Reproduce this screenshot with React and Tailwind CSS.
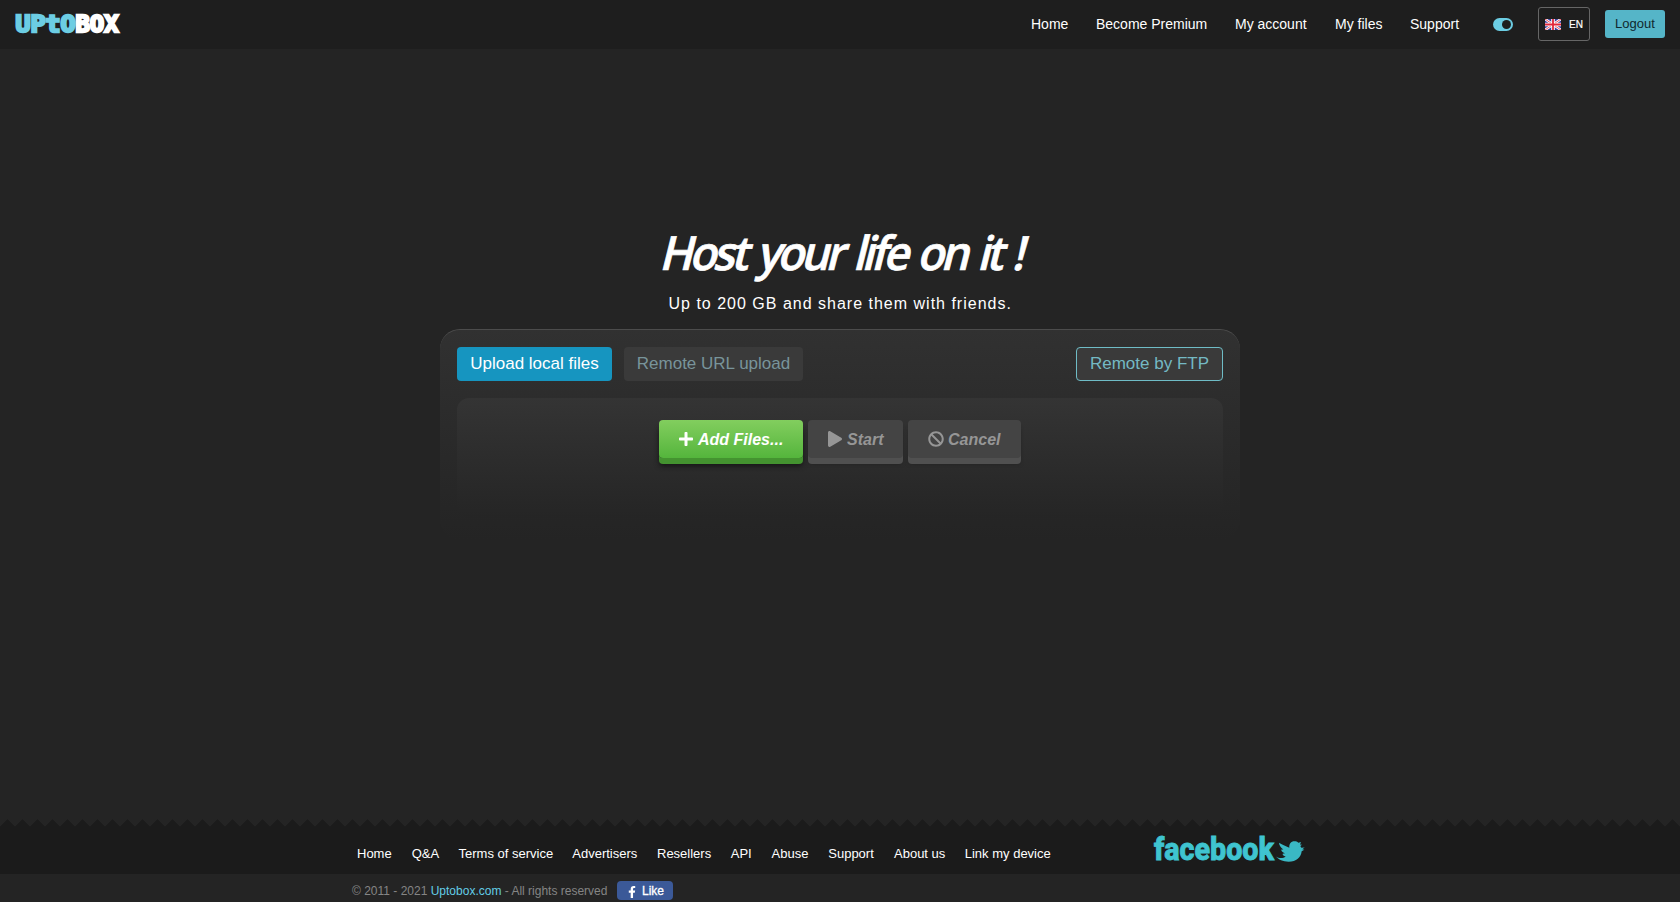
import React from "react";
import { FaPlus, FaPlay, FaBan, FaFacebookF } from "react-icons/fa";

const NAV = [
  ["Home", "w-[37px]"],
  ["Become Premium", "w-[111px]"],
  ["My account", "w-[72px]"],
  ["My files", "w-[47px]"],
  ["Support", "w-[50px]"],
];

const LINKS = [
  ["Home", "w-[35px]"],
  ["Q&A", "w-[27px]"],
  ["Terms of service", "w-[94px]"],
  ["Advertisers", "w-[65px]"],
  ["Resellers", "w-[54px]"],
  ["API", "w-[21px]"],
  ["Abuse", "w-[37px]"],
  ["Support", "w-[46px]"],
  ["About us", "w-[51px]"],
  ["Link my device", "w-[86px]"],
];

function Logo() {
  return (
    <svg width="108" height="24" viewBox="0 0 108 24" className="block overflow-visible">
      <g fontFamily="'DejaVu Sans Mono', monospace" fontWeight="700" fontSize="23" strokeWidth="2.4" strokeLinejoin="miter">
        <text x="1.5" y="19.8" textLength="60" lengthAdjust="spacingAndGlyphs" fill="#6ccde3" stroke="#6ccde3">UPtO</text>
        <text x="61.5" y="19.8" textLength="43" lengthAdjust="spacingAndGlyphs" fill="#fff" stroke="#fff">BOX</text>
      </g>
    </svg>
  );
}

function Flag() {
  return (
    <svg width="16" height="11" viewBox="0 0 16 11" className="block">
      <rect width="16" height="11" fill="#3a3f9c" />
      <path d="M0 0L16 11M16 0L0 11" stroke="#fff" strokeWidth="2.6" />
      <path d="M0 0L16 11M16 0L0 11" stroke="#e8505c" strokeWidth="1" />
      <path d="M8 0V11M0 5.5H16" stroke="#fff" strokeWidth="3.6" />
      <path d="M8 0V11M0 5.5H16" stroke="#e2263a" strokeWidth="1.8" />
    </svg>
  );
}

function Bird() {
  return (
    <svg width="30" height="21" viewBox="0 0 90 62" preserveAspectRatio="none" className="mt-[5px] ml-px block text-[#3ab8c4]">
      <path
        fill="currentColor"
        d="M12 5C20 11 32 14 43 20C42 9 48 1 58 1C63 1 67 2 70 5L78 3L75 10L81 11L76 15L79 20L89 19L82 24L88 26L80 30C78 48 64 61 41 61C24 61 10 55 3 46C12 52 24 52 32 46C25 44 22 41 23 38L30 36C22 34 18 29 19 25L25 25C17 19 12 12 12 5Z"
      />
    </svg>
  );
}

function Header() {
  return (
    <header className="flex h-[49px] items-center bg-[#1e1e1e] pr-[15px] pl-[14px] text-white">
      <div className="mb-[2px]"><Logo /></div>
      <nav className="mb-[1px] ml-auto flex gap-[28px] text-[14px] leading-[20px]">
        {NAV.map(([t, w]) => (
          <a key={t} className={`block whitespace-nowrap ${w}`}>{t}</a>
        ))}
      </nav>
      <div className="ml-[33px] flex h-[13px] w-[20px] items-center justify-end rounded-full bg-[#6ccde3] pr-[2px]">
        <div className="size-[9px] rounded-full bg-[#1e1e1e]" />
      </div>
      <button className="mb-[1px] ml-[25px] flex h-[34px] w-[52px] items-center rounded-[3px] border border-[#666] pl-[6px]">
        <Flag />
        <span className="ml-[8px] text-[10px] [-webkit-text-stroke:0.2px_white]">EN</span>
      </button>
      <button className="mb-[1px] ml-[15px] h-[28px] w-[60px] rounded-[3px] bg-[#55b5c8] text-[13px] leading-[28px] text-[#10282e]">Logout</button>
    </header>
  );
}

function Main() {
  return (
    <main className="flex h-[770px] flex-col items-center pt-[170px] text-white">
      <h1 className="h-[68px] w-[363px] whitespace-nowrap">
        <span className="block origin-[0_50px] [transform:skewX(-14deg)_scaleX(0.95)] font-['Open_Sans',sans-serif] text-[47px] leading-[66px] font-semibold tracking-[-3.8px] [word-spacing:4px] [-webkit-text-stroke:0.7px_white]">Host your life on it !</span>
      </h1>
      <p className="mt-[5px] h-[24px] w-[343px] text-[16px] leading-[24px] tracking-[1px] whitespace-nowrap">Up to 200 GB and share them with friends.</p>
      <section className="mt-[13px] h-[211px] w-[800px] rounded-[20px] border-t border-[#4c4c4c] bg-linear-to-b from-[#313131] to-[#242424] px-[17px] pt-[17px]">
        <div className="flex h-[34px] text-[17px] leading-[32px]">
          <button className="w-[155px] rounded-[4px] bg-[#1695c0]">Upload local files</button>
          <button className="ml-[12px] w-[179px] rounded-[4px] bg-[#3a3a3a] text-[#78949a]">Remote URL upload</button>
          <button className="ml-auto w-[147px] rounded-[4px] border border-[#6fbcc6] bg-[#3a3a3a] leading-[30px] text-[#74b9c4]">Remote by FTP</button>
        </div>
        <div className="mt-[17px] flex h-[120px] justify-center gap-[5px] rounded-[12px] bg-linear-to-b from-[#343434] to-[#252525] pt-[22px] text-[16px] font-bold italic">
          <button className="flex h-[38px] w-[144px] items-center rounded-[4px] bg-linear-to-b from-[#82ce5e] to-[#54b53c] pl-[19px] whitespace-nowrap shadow-[0_6px_0_#449330,0_8px_5px_#151515]">
            <FaPlus size={16} />
            <span className="mt-[2px] ml-[4px]">Add Files...</span>
          </button>
          <button className="flex h-[38px] w-[95px] items-center rounded-[4px] bg-[#444] pl-[19px] text-[#969696] shadow-[0_6px_0_#505050,0_7px_3px_#262626]">
            <FaPlay size={16} />
            <span className="mt-[2px] ml-[4px]">Start</span>
          </button>
          <button className="flex h-[38px] w-[113px] items-center rounded-[4px] bg-[#444] pl-[20px] text-[#969696] shadow-[0_6px_0_#505050,0_7px_3px_#262626]">
            <FaBan size={16} />
            <span className="mt-[2px] ml-[4px]">Cancel</span>
          </button>
        </div>
      </section>
    </main>
  );
}

function Footer() {
  return (
    <footer>
      <svg width="1680" height="8" className="block">
        <defs>
          <pattern id="zigzag" width="15" height="8" patternUnits="userSpaceOnUse">
            <path d="M0 7.5L7.5 0L15 7.5V8H0Z" fill="#1b1b1b" />
          </pattern>
        </defs>
        <rect width="1680" height="8" fill="url(#zigzag)" />
      </svg>
      <div className="flex h-[47px] bg-[#1b1b1b] pl-[357px] text-white">
        <nav className="flex gap-[19.75px] pt-[17px] text-[13px] leading-[20px]">
          {LINKS.map(([t, w]) => (
            <a key={t} className={`block whitespace-nowrap ${w}`}>{t}</a>
          ))}
        </nav>
        <div className="ml-auto flex w-[527px] pt-[9px]">
          <svg width="121" height="26" className="block overflow-visible">
            <text x="1" y="24" textLength="120" lengthAdjust="spacingAndGlyphs" fontFamily="Roboto, sans-serif" fontWeight="800" fontSize="32" fill="#3fc4d0" stroke="#3fc4d0" strokeWidth="0.9">facebook</text>
          </svg>
          <Bird />
        </div>
      </div>
      <div className="flex h-[28px] items-center pl-[352px] text-[12px] text-[#858585]">
        <span className="mt-[5px] w-[255px] whitespace-nowrap">
          © 2011 - 2021 <a className="text-[#63cde6]">Uptobox.com</a> - All rights reserved
        </span>
        <button className="mt-[5px] ml-[10px] flex h-[19px] w-[56px] items-center rounded-[4px] bg-[#3b5998] pl-[9px] text-white">
          <FaFacebookF size={12} className="mt-[3px]" />
          <span className="ml-[4px] [-webkit-text-stroke:0.3px_white]">Like</span>
        </button>
      </div>
    </footer>
  );
}

export default function App() {
  return (
    <div className="h-[902px] w-[1680px] overflow-hidden bg-[#242424] font-['Liberation_Sans',Arial,sans-serif]">
      <Header />
      <Main />
      <Footer />
    </div>
  );
}
